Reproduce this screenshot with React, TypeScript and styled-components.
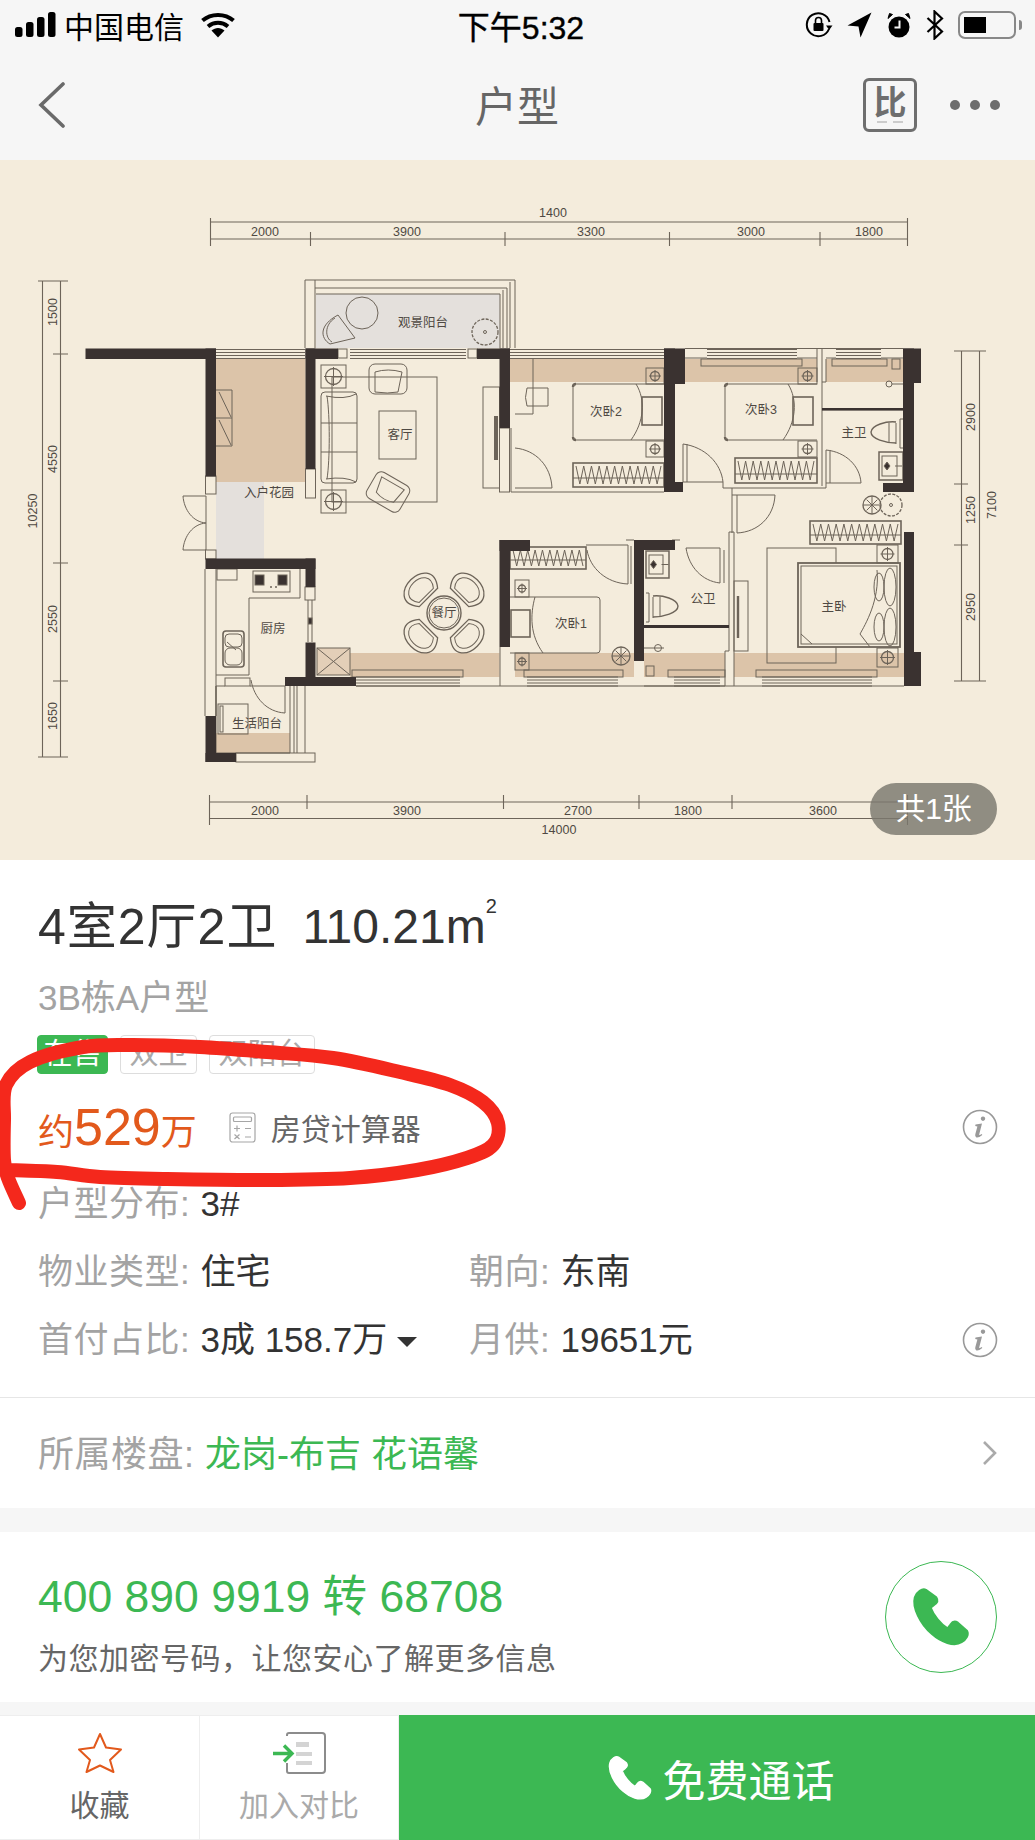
import React from "react";
import styled, { createGlobalStyle } from "styled-components";

const GREEN = "#3cb853";
const ORANGE = "#e2591c";
const WALL = "#3a3230";
const LINE = "#6d6459";
const BROWN = "#dcc4a9";
const PALE = "#e4e0dc";
const PLAN_BG = "#f4ecdc";

const GlobalStyle = createGlobalStyle`
  html, body {
    margin: 0;
    padding: 0;
    background: #f6f6f6;
    font-family: "Liberation Sans", "Noto Sans CJK SC", sans-serif;
  }
`;

/* ---------- floor plan data ---------- */

type Box = [number, number, number, number];

const walls: Box[] = [
  [85.5, 188.5, 130.5, 10.5],
  [205.5, 188.5, 10.5, 128],
  [305.5, 188.5, 10, 120.5],
  [305.5, 188.5, 32.5, 10.5],
  [477, 188.5, 33, 10.5],
  [499.5, 188.5, 10.5, 79.5],
  [664, 188.5, 21, 35.5],
  [664, 188.5, 11, 143.5],
  [664, 322, 19, 10],
  [903, 188.5, 18, 34.5],
  [903, 188.5, 11, 143.5],
  [883, 323, 31, 9],
  [205.5, 398.5, 110, 10.5],
  [305.5, 398.5, 10, 28.5],
  [305.5, 482.5, 10, 43.5],
  [285, 517, 71, 9],
  [205.5, 556, 10.5, 46],
  [205.5, 593, 30.5, 9],
  [499.5, 380, 10.5, 107],
  [499.5, 380, 30.5, 11],
  [634, 380, 10, 121],
  [634, 380, 41, 10],
  [904, 372, 10, 154],
  [904, 492, 17, 34],
];

const browns: Box[] = [
  [216, 199, 89.5, 123],
  [510, 199, 154, 23],
  [685, 199, 132, 23],
  [826, 199, 77, 23],
  [350, 493, 149.5, 24],
  [515, 493, 119, 24],
  [644, 493, 81, 24],
  [734, 493, 170, 24],
  [216, 573, 74, 20],
];

const outlines: Box[] = [
  [205.5, 316, 10.5, 18],
  [305.5, 309, 10, 29],
  [305, 427, 10, 13],
  [205.5, 390, 10.5, 9],
  [236, 593, 79, 9],
  [338, 189, 9, 9],
  [468, 189, 9, 9],
  [483, 227, 16.5, 101],
  [499.5, 268, 10, 64],
  [379, 251, 37, 48],
  [332, 217, 105, 125],
  [767, 388, 69, 115],
  [734, 421, 14, 70],
  [701, 199, 101, 7],
  [832, 199, 55, 7],
  [524, 510, 99, 7],
  [668, 510, 57, 7],
  [756, 510, 121, 7],
  [352, 510, 111, 7],
  [892, 199, 8, 10],
  [646, 506, 8, 10],
  [217, 409, 20, 11],
  [253, 411, 37, 21],
  [225, 518, 25, 8],
  [218, 544, 30, 30],
  [317, 488, 33, 27],
];

const windows: Box[] = [
  [216, 189.5, 89, 9],
  [350, 189.5, 116, 9],
  [510, 189.5, 154, 9],
  [707, 189.5, 90, 9],
  [836, 189.5, 45, 9],
  [356, 517, 104, 9],
  [527, 517, 91, 9],
  [674, 517, 46, 9],
  [762, 517, 110, 9],
];

const paths: string[] = [
  // balcony frame
  "M305 188V120H515V188M315 120V188M315 128H507V188M316 134H500V188M503 130V188M510 122V188",
  // entry door and walls
  "M183 336H206V390H183M183 336C184 350 193 362 206 363C193 364 184 376 183 390",
  // cabinet in the entry garden
  "M216 230H232V286H216M216 258H232M219 232L231 257M219 260L231 285",
  // door and wall of bedroom 2
  "M515 288C536 290 551 306 552 328H515M552 332H664M511 268V332H552",
  // desk in bedroom 2
  "M533 199V254H515M527 228H548V246H527Q524 238 527 228",
  // door between bedroom 2 and 3
  "M683 284V322H723M687 284V322M683 284C705 287 721 303 723 322M723 322V328H826V290M732 328V373M737 335V373M732 335H775C774 357 758 372 737 373",
  // top outline of bedroom 3 and the bathroom
  "M685 188.5H903M685 198H707M797 198H817M826 198H836M881 198H903",
  // bathroom partition
  "M817 188V222M822 188V222H826V199M822 222V326",
  // master bathroom door, towel ring
  "M826 290C846 292 860 306 861 323H826M830 290V323M892 224H903",
  // corridor and public bathroom
  "M729 372H734V517M729 372V491H725V526H636M734 517V526M672 380H680M686 388H720V423M724 390V423M686 388C689 407 702 421 720 423M664 488H644",
  // bedroom 1 door
  "M586 385H628V424M631 386V424M587 390C590 408 606 423 628 424M626 380H634",
  // bedroom 1 bed
  "M510 437H597Q600 437 600 440V490Q600 493 597 493H510",
  // lower wall of the flat
  "M644 526H904M500 487V526H636M356 526H500",
  // kitchen counter
  "M216 409V556M205 409V556M300 409V438H249V515H216M216 526H225M250 526H285M308 440V482M312 440V482",
  // utility balcony
  "M216 556V526M216 526V593H290M251 520C254 538 267 552 285 553V526M290 526V593M294 526V593M297 526V593M305 526V593",
];

const beds = [
  { x: 573, bedW: 91, pillowX: 642, lampX: 646 },
  { x: 725, bedW: 92, pillowX: 793, lampX: 798 },
];

const wardrobes: Box[] = [
  [573, 303, 91, 24],
  [735, 298, 82, 25],
  [810, 361, 91, 23],
  [510, 387, 76, 22],
];

const lamps: [number, number, number, number][] = [
  [321, 205, 25, 23],
  [321, 330, 25, 23],
  [646, 208, 18, 16],
  [646, 281, 18, 16],
  [798, 208, 19, 16],
  [798, 281, 19, 16],
  [515, 420, 14, 17],
  [515, 493, 14, 17],
];

const rooms: [string, number, number][] = [
  ["观景阳台", 423, 163],
  ["客厅", 400, 275],
  ["入户花园", 269, 333],
  ["次卧2", 606, 252],
  ["次卧3", 761, 250],
  ["主卫", 854, 273],
  ["厨房", 273, 469],
  ["餐厅", 444, 453],
  ["生活阳台", 257, 564],
  ["次卧1", 571, 464],
  ["公卫", 703, 439],
  ["主卧", 834, 447],
];

const hDims: [string, number, number][] = [
  ["1400", 553, 53],
  ["2000", 265, 72],
  ["3900", 407, 72],
  ["3300", 591, 72],
  ["3000", 751, 72],
  ["1800", 869, 72],
  ["2000", 265, 651],
  ["3900", 407, 651],
  ["2700", 578, 651],
  ["1800", 688, 651],
  ["3600", 823, 651],
  ["14000", 559, 670],
];

const vDims: [string, number, number][] = [
  ["1500", 53, 152],
  ["4550", 53, 299],
  ["10250", 33, 351],
  ["2550", 53, 459],
  ["1650", 53, 556],
  ["2900", 971, 257],
  ["1250", 971, 350],
  ["7100", 991.5, 345],
  ["2950", 971, 447],
];

const dimLines =
  "M210.5 62H907.5M210.5 79H907.5M210.5 58V86M310.5 72V86M505 72V86M669.5 72V86M820 72V86M907.5 58V86" +
  "M42.5 121V597M60.5 121V597M38 121H68M53 194H68M53 403H68M53 521H68M38 597H68" +
  "M209.5 642H907.5M209.5 658.5H907.5M209.5 635V665M307 635V649M503.5 635V649M639 635V649M732 635V649M907.5 635V665" +
  "M961.5 191V521M979.5 191V521M954 191H986M954 324H968M954 385H968M954 521H986";

/* ---------- small drawings ---------- */

const Lamp = ({ box }: { box: [number, number, number, number] }) => {
  const [x, y, w, h] = box;
  const cx = x + w / 2;
  const cy = y + h / 2;
  const r = Math.min(w, h) / 2 - 3.5;
  return (
    <g>
      <rect x={x} y={y} width={w} height={h} />
      <circle cx={cx} cy={cy} r={r} strokeWidth={1.3} />
      <path d={`M${cx - r - 1.5} ${cy}H${cx + r + 1.5}M${cx} ${cy - r - 1.5}V${cy + r + 1.5}`} />
    </g>
  );
};

const Wardrobe = ({ box }: { box: Box }) => {
  const [x, y, w, h] = box;
  const count = Math.floor(w / 4);
  let zig = `M${x + 3} ${y + 3}`;
  for (let i = 1; i <= count; i++) {
    zig += `L${x + 3 + ((w - 6) * i) / count} ${i % 2 ? y + h - 3 : y + 3}`;
  }
  return (
    <g>
      <rect x={x} y={y} width={w} height={h} strokeWidth={1.6} />
      <path d={zig} />
      <path d={`M${x} ${y + h - 9}H${x + w}`} strokeWidth={1.2} />
    </g>
  );
};

const Bed = ({ x, bedW, pillowX, lampX }: { x: number; bedW: number; pillowX: number; lampX: number }) => (
  <g>
    <path d={`M${x + 3} 224H${x + bedW}M${x + 3} 280H${x + bedW}M${x} 227V277`} />
    <path d={`M${x} 227Q${x} 224 ${x + 3} 224M${x} 277Q${x} 280 ${x + 3} 280`} strokeWidth={2.4} />
    <rect x={pillowX} y={237} width={20} height={28} strokeWidth={1.6} />
    <path d={`M${lampX - 10} 224C${lampX} 240 ${lampX - 2} 262 ${lampX - 15} 280`} />
  </g>
);

const Plant = ({ x, y, r, dark }: { x: number; y: number; r: number; dark?: boolean }) => (
  <g>
    <circle cx={x} cy={y} r={r} strokeDasharray={dark ? undefined : "3 1.4"} strokeWidth={1.3} />
    {dark ? (
      <path d={`M${x - r} ${y}H${x + r}M${x} ${y - r}V${y + r}M${x - r * 0.6} ${y - r * 0.6}L${x + r * 0.6} ${y + r * 0.6}M${x - r * 0.6} ${y + r * 0.6}L${x + r * 0.6} ${y - r * 0.6}`} />
    ) : (
      <circle cx={x} cy={y} r={1.5} />
    )}
  </g>
);

const Toilet = ({ x, y, flip }: { x: number; y: number; flip?: boolean }) => (
  <g transform={flip ? `translate(${x + 33} ${y}) scale(-1 1)` : `translate(${x} ${y})`}>
    <path d="M26 4V25M30 0V29M33 0H30M33 29H30" />
    <path d="M26 3C16 2 2 6 1 13C1 20 16 24 26 24" strokeWidth={1.4} />
    <path d="M19 4V23" />
  </g>
);

const Sink = ({ x, y, w, h }: { x: number; y: number; w: number; h: number }) => (
  <g>
    <rect x={x} y={y} width={w} height={h} strokeWidth={1.5} />
    <rect x={x + 3} y={y + 4} width={w - 9} height={h - 8} />
    <path d={`M${x + w / 2 - 4} ${y + h / 2 - 4}l3 4l-3 4l-3 -4zM${x + w / 2 + 4} ${y + h / 2}h7`} fill={WALL} />
  </g>
);

// dining chair, drawn above the table and turned round its centre
const Chair = ({ angle }: { angle: number }) => (
  <g transform={`rotate(${angle} 444 453)`}>
    <path d="M431 431H457C470 415 456 406 444 406C432 406 418 415 431 431Z" strokeWidth={1.3} />
    <path d="M434 428H454C463 417 453 410 444 410C435 410 425 417 434 428Z" />
  </g>
);

const FloorPlanDrawing = () => (
  <PlanSvg viewBox="0 0 1035 700">
    {browns.map(([x, y, w, h]) => (
      <rect key={`${x}-${y}`} x={x} y={y} width={w} height={h} fill={BROWN} />
    ))}
    <rect x={216} y={322} width={48} height={77} fill={PALE} />
    <rect x={316} y={134} width={184} height={54} fill={PALE} />
    <rect x={317} y={488} width={33} height={27} fill="#e3cfb8" />

    <PlanLines>
      {paths.map((d) => (
        <path key={d} d={d} />
      ))}
      {outlines.map(([x, y, w, h]) => (
        <rect key={`o${x}-${y}`} x={x} y={y} width={w} height={h} />
      ))}
      {windows.map(([x, y, w, h]) => (
        <path key={`w${x}-${y}`} d={`M${x} ${y}H${x + w}M${x} ${y + 3}H${x + w}M${x} ${y + 6}H${x + w}M${x} ${y + 9}H${x + w}`} />
      ))}
      {lamps.map((b) => (
        <Lamp key={`l${b[0]}-${b[1]}`} box={b} />
      ))}
      {wardrobes.map((b) => (
        <Wardrobe key={`wd${b[0]}`} box={b} />
      ))}
      {beds.map((b) => (
        <Bed key={b.x} {...b} />
      ))}

      {/* balcony furniture */}
      <circle cx={362} cy={153} r={16} />
      <path d="M338 155L355 178L330 184C320 178 319 165 338 155Z" />
      <path d="M335 158C324 165 325 178 332 182" />
      <Plant x={485} y={172} r={13} />

      {/* living room */}
      <rect x={321} y={232} width={36} height={91} rx={4} />
      <path d="M321 263H357M321 292H357M327 236C330 255 330 300 327 319M326 236Q345 240 356 234M326 319Q345 316 356 322" />
      <rect x={369} y={204} width={38} height={30} rx={6} />
      <path d="M375 212Q388 208 402 212L398 232Q388 234 375 232Z" />
      <g transform="rotate(30 388 332)">
        <rect x={369} y={317} width={38} height={30} rx={6} />
        <path d="M375 322L401 322L398 338Q388 342 378 338Z" />
      </g>
      <path d="M495 256V300M497 256V300" strokeWidth={2} />

      {/* kitchen */}
      <rect x={255} y={415} width={9} height={10} fill={WALL} />
      <rect x={278} y={415} width={9} height={10} fill={WALL} />
      <path d="M270 427H272M275 427H277" strokeWidth={1.5} />
      <rect x={223} y={471} width={21} height={36} rx={3} strokeWidth={1.6} />
      <rect x={225} y={474} width={17} height={13} rx={4} />
      <rect x={225} y={488} width={17} height={17} rx={5} />
      <path d="M227 482l9 8M317 488L350 515M350 488L317 515" />
      <rect x={308.5} y={458} width={3.5} height={6} fill={WALL} />
      <rect x={220} y={546} width={3} height={26} />

      {/* dining room */}
      <circle cx={444} cy={453} r={17} strokeWidth={1.4} />
      <circle cx={444} cy={453} r={15} />
      <Chair angle={-45} />
      <Chair angle={45} />
      <Chair angle={135} />
      <Chair angle={225} />

      {/* bathrooms */}
      <circle cx={889} cy={224} r={3} />
      <circle cx={658} cy={488} r={3.5} />
      <Toilet x={870} y={259} />
      <Toilet x={646} y={433} flip />
      <Sink x={879} y={292} w={24} h={28} />
      <Sink x={646} y={391} w={23} h={27} />
      <Plant x={872} y={345} r={9} dark />
      <Plant x={891} y={345} r={11} />
      <Plant x={621} y={496} r={9} dark />

      {/* bedroom 1 */}
      <rect x={511} y={450} width={19} height={27} strokeWidth={1.6} />
      <path d="M535 437C530 455 530 475 543 493" />

      {/* master bedroom */}
      <rect x={798} y={403} width={102} height={84} fill={PLAN_BG} strokeWidth={1.8} />
      <rect x={801} y={406} width={96} height={78} />
      <ellipse cx={890} cy={427} rx={6} ry={19} />
      <ellipse cx={879} cy={427} rx={5} ry={14} />
      <ellipse cx={890} cy={467} rx={6} ry={19} />
      <ellipse cx={879} cy={467} rx={5} ry={14} />
      <path d="M877 410C880 440 865 465 860 474L870 487M801 474L812 484" />
      <Lamp box={[877, 385, 21, 18]} />
      <Lamp box={[877, 488, 21, 19]} />
      <path d="M738 436V478" strokeWidth={2.4} />
    </PlanLines>

    {walls.map(([x, y, w, h]) => (
      <rect key={`${x}-${y}-${w}`} x={x} y={y} width={w} height={h} fill={WALL} />
    ))}
    <rect x={644} y={465} width={85} height={3} fill={WALL} />
    <rect x={822} y={248} width={81} height={2.6} fill={WALL} />

    <DimLine d={dimLines} />
    {hDims.map(([t, x, y]) => (
      <DimText key={`${t}-${x}-${y}`} x={x} y={y} dy="0.35em">
        {t}
      </DimText>
    ))}
    {vDims.map(([t, x, y]) => (
      <DimText key={`${t}-${x}-${y}`} x={x} y={y} dy="0.35em" transform={`rotate(-90 ${x} ${y})`}>
        {t}
      </DimText>
    ))}
    {rooms.map(([t, x, y]) => (
      <RoomText key={t} x={x} y={y} dy="0.35em">
        {t}
      </RoomText>
    ))}
  </PlanSvg>
);

/* ---------- icons ---------- */

const PhoneGlyph = ({ size, color }: { size: number; color: string }) => (
  <svg width={size} height={size} viewBox="-2 -2 64 64">
    <path
      fill={color}
      stroke={color}
      strokeWidth={2}
      strokeLinejoin="round"
      d="M14 1C10 -1 4 3 2 9C-1 20 8 38 20 48C30 57 44 62 52 57C57 54 60 49 58 45L48 36C45 34 42 35 40 38L37 42C30 38 22 28 19 20L23 17C26 15 27 12 25 9Z"
    />
  </svg>
);

const InfoIcon = () => (
  <svg width={36} height={36} viewBox="0 0 36 36">
    <circle cx={18} cy={18} r={16.5} fill="none" stroke="#999" strokeWidth={1.6} />
    <path fill="#999" d="M21 7.5a2.2 2.2 0 1 1-.01 0ZM13.5 15.5L20 14.6L17.2 25.5Q17 26.8 19.8 25L20.3 26Q16.5 29 14.4 28.4Q12.6 27.8 13.3 25.3L15.4 17.4L13.2 17Z" />
  </svg>
);

const CalcIcon = () => (
  <svg width={27} height={31} viewBox="0 0 27 31" fill="none" stroke="#a6a6a6" strokeWidth={1.2}>
    <rect x={1} y={1} width={25} height={29} rx={2.5} />
    <rect x={4.5} y={5} width={18} height={4.5} rx={1} />
    <path d="M5 16.5H11M8 13.5V19.5M16 16.5H22M5.5 22.5L10.5 27M10.5 22.5L5.5 27M16 25H22M19 22.5V22.6M19 27.2V27.3" />
  </svg>
);

const SignalIcon = () => (
  <svg width={41} height={26} viewBox="0 0 41 26" fill="#000">
    <rect x={0} y={15} width={7.5} height={10} rx={2.5} />
    <rect x={11} y={10} width={7.5} height={15} rx={2.5} />
    <rect x={22} y={5} width={7.5} height={20} rx={2.5} />
    <rect x={33} y={0} width={7.5} height={25} rx={2.5} />
  </svg>
);

const WifiIcon = () => (
  <svg width={36} height={26} viewBox="0 0 36 26">
    <path d="M2.5 8.5C11 1 25 1 33.5 8.5" fill="none" stroke="#000" strokeWidth={4} />
    <path d="M8 14.5C14 9.5 22 9.5 28 14.5" fill="none" stroke="#000" strokeWidth={4} />
    <path d="M11.5 18.5C15.5 15 20.5 15 24.5 18.5L18 25.5Z" />
  </svg>
);

const RotationLockIcon = () => (
  <svg width={28} height={28} viewBox="0 0 28 28" fill="none" stroke="#000" strokeWidth={2}>
    <path d="M24 18A11.5 11.5 0 1 1 24.5 11" />
    <path d="M21 14.5H27.5L24.2 19Z" fill="#000" stroke="none" />
    <rect x={8.5} y={12} width={10} height={8} rx={1} fill="#000" stroke="none" />
    <path d="M10.5 12V9.5A3 3 0 0 1 16.5 9.5V12" strokeWidth={1.6} />
  </svg>
);

const LocationIcon = () => (
  <svg width={25} height={26} viewBox="0 0 25 26">
    <path d="M24.5 0.5L0.5 13.5L11.5 14.5L13.5 25.5Z" />
  </svg>
);

const AlarmIcon = () => (
  <svg width={26} height={26} viewBox="0 0 26 26">
    <circle cx={13} cy={15} r={10.5} />
    <path d="M2 6.5L6.5 2.5L3.5 1.5ZM24 6.5L19.5 2.5L22.5 1.5Z" stroke="#000" />
    <path d="M13.5 8.5V15.5H8.5" fill="none" stroke="#f6f6f6" strokeWidth={2} />
  </svg>
);

const BluetoothIcon = () => (
  <svg width={18} height={30} viewBox="0 0 18 30" fill="none" stroke="#000" strokeWidth={2.2}>
    <path d="M1.5 8L16 21.5L8.5 28.5V1.5L16 8.5L1.5 22" />
  </svg>
);

const CompareIcon = () => (
  <svg width={54} height={42} viewBox="0 0 54 42">
    <path d="M15 4V3Q15 1 17 1H50Q53 1 53 4V38Q53 41 50 41H17Q15 41 15 39V31" fill="none" stroke="#8c8c8c" strokeWidth={2} />
    <path fill="#d4d4d4" d="M24 10H37V15H24ZM24 20H40V24H24ZM24 29H40V33H24Z" />
    <path d="M1 21.5H19M12 13.5L20 21.5L12 29.5" fill="none" stroke={GREEN} strokeWidth={3.4} />
  </svg>
);

const StarIcon = () => (
  <svg width={46} height={42} viewBox="0 0 46 42">
    <path
      d="M23 2L29 15.5L44 17.5L33 28L36.5 40L23 33.5L9.5 40L13 28L2 17.5L17 15.5Z"
      fill="none"
      stroke={ORANGE}
      strokeWidth={2}
      strokeLinejoin="round"
    />
  </svg>
);

/* hand-drawn red mark over the price row */
const scribble: [number, number][] = [
  [19, 173], [8, 148], [4, 130], [4, 90], [6, 55], [30, 32], [83, 17], [133, 15], [200, 17],
  [267, 22], [333, 28], [400, 42], [450, 55], [483, 72], [498, 93], [493, 115], [467, 128],
  [417, 140], [350, 148], [267, 150], [167, 149], [100, 147], [57, 142], [6, 140],
];

const smooth = (pts: [number, number][]) => {
  let d = `M${pts[0][0]} ${pts[0][1]}`;
  for (let i = 0; i < pts.length - 1; i++) {
    const p0 = pts[Math.max(i - 1, 0)];
    const p1 = pts[i];
    const p2 = pts[i + 1];
    const p3 = pts[Math.min(i + 2, pts.length - 1)];
    d += `C${p1[0] + (p2[0] - p0[0]) / 6} ${p1[1] + (p2[1] - p0[1]) / 6} ${p2[0] - (p3[0] - p1[0]) / 6} ${p2[1] - (p3[1] - p1[1]) / 6} ${p2[0]} ${p2[1]}`;
  }
  return d;
};

export default function App() {
  return (
    <Page>
      <GlobalStyle />
      <Header>
        <StatusBar>
          <StatusLeft>
            <SignalIcon />
            <Carrier>中国电信</Carrier>
            <WifiIcon />
          </StatusLeft>
          <Clock>下午5:32</Clock>
          <StatusRight>
            <RotationLockIcon />
            <LocationIcon />
            <AlarmIcon />
            <BluetoothIcon />
            <Battery>
              <BatteryFill />
            </Battery>
            <BatteryNub />
          </StatusRight>
        </StatusBar>
        <NavBar>
          <svg width={30} height={46} viewBox="0 0 30 46" fill="none" stroke="#6a6a6a" strokeWidth={3.6} strokeLinecap="round">
            <path d="M25 2L3 23L25 44" />
          </svg>
          <NavTitle>户型</NavTitle>
          <NavActions>
            <CompareBadge>
              <CompareChar>比</CompareChar>
              <CompareDashes />
            </CompareBadge>
            <MoreDots>
              <Dot />
              <Dot />
              <Dot />
            </MoreDots>
          </NavActions>
        </NavBar>
      </Header>

      <PlanArea>
        <FloorPlanDrawing />
        <CountPill>共1张</CountPill>
      </PlanArea>

      <InfoSection>
        <Title>
          <TitleRooms>4室2厅2卫</TitleRooms>
          <TitleArea>110.21m</TitleArea>
          <Sup>2</Sup>
        </Title>
        <SubTitle>3B栋A户型</SubTitle>
        <Tags>
          <Tag $solid>在售</Tag>
          <Tag>双卫</Tag>
          <Tag>双阳台</Tag>
        </Tags>
        <PriceRow>
          <Price>
            约<PriceNum>529</PriceNum>万
          </Price>
          <CalcLink>
            <CalcIcon />
            <CalcText>房贷计算器</CalcText>
          </CalcLink>
          <RowIcon>
            <InfoIcon />
          </RowIcon>
        </PriceRow>
        <Facts>
          <FactRow>
            <Fact>
              <Label>户型分布: </Label>3#
            </Fact>
          </FactRow>
          <FactRow>
            <Fact>
              <Label>物业类型: </Label>住宅
            </Fact>
            <Fact>
              <Label>朝向: </Label>东南
            </Fact>
          </FactRow>
          <FactRow>
            <Fact>
              <Label>首付占比: </Label>3成 158.7万 <Caret />
            </Fact>
            <Fact>
              <Label>月供: </Label>19651元
            </Fact>
            <RowIcon>
              <InfoIcon />
            </RowIcon>
          </FactRow>
        </Facts>
      </InfoSection>

      <EstateRow>
        <EstateText>
          <Label>所属楼盘: </Label>
          <GreenText>龙岗-布吉 花语馨</GreenText>
        </EstateText>
        <svg width={16} height={26} viewBox="0 0 16 26" fill="none" stroke="#aaa" strokeWidth={2.6}>
          <path d="M2 2L13 13L2 24" />
        </svg>
      </EstateRow>

      <ContactCard>
        <ContactText>
          <HotLine>400 890 9919 转 68708</HotLine>
          <HotLineNote>为您加密号码，让您安心了解更多信息</HotLineNote>
        </ContactText>
        <CallCircle>
          <PhoneGlyph size={60} color={GREEN} />
        </CallCircle>
      </ContactCard>

      <BottomBar>
        <BarItem>
          <StarIcon />
          <BarLabel>收藏</BarLabel>
        </BarItem>
        <BarItem>
          <CompareIcon />
          <BarLabel $muted>加入对比</BarLabel>
        </BarItem>
        <CallButton>
          <PhoneGlyph size={46} color="#fff" />
          免费通话
        </CallButton>
      </BottomBar>

      <ScribbleMark viewBox="0 0 520 190" fill="none">
        <path d={smooth(scribble)} stroke="#f4281c" strokeWidth={14} strokeLinecap="round" strokeLinejoin="round" />
      </ScribbleMark>
    </Page>
  );
}

const Page = styled.div`
  position: relative;
  width: 1035px;
  height: 1840px;
  overflow: hidden;
  background: #f6f6f6;
  color: #333;
`;

const Header = styled.header`
  height: 160px;
  background: #f6f6f6;
`;

const StatusBar = styled.div`
  display: grid;
  grid-template-columns: 1fr auto 1fr;
  align-items: center;
  height: 50px;
  padding: 0 13px 0 15px;
  color: #000;
`;

const StatusLeft = styled.div`
  display: flex;
  align-items: center;
  gap: 8px;
`;

const Carrier = styled.span`
  font-size: 30px;
  margin-right: 8px;
`;

const Clock = styled.span`
  font-size: 32px;
  margin-left: 5px;
  -webkit-text-stroke: 0.4px #000;
`;

const StatusRight = styled.div`
  display: flex;
  align-items: center;
  justify-content: flex-end;
  gap: 14px;
`;

const Battery = styled.div`
  box-sizing: border-box;
  width: 58px;
  height: 28px;
  padding: 4px;
  border: 2.5px solid #888;
  border-radius: 7px;
`;

const BatteryFill = styled.div`
  width: 22px;
  height: 100%;
  background: #000;
`;

const BatteryNub = styled.div`
  width: 3px;
  height: 10px;
  margin-left: -11px;
  background: #888;
  border-radius: 0 3px 3px 0;
`;

const NavBar = styled.div`
  display: grid;
  grid-template-columns: 1fr auto 1fr;
  align-items: center;
  height: 110px;
  padding: 0 35px 0 38px;
`;

const NavTitle = styled.h1`
  margin: 0 0 4px -4px;
  font-size: 42px;
  font-weight: 400;
  color: #666;
`;

const NavActions = styled.div`
  display: flex;
  align-items: center;
  justify-content: flex-end;
  gap: 33px;
`;

const CompareBadge = styled.div`
  box-sizing: border-box;
  display: flex;
  flex-direction: column;
  align-items: center;
  width: 54px;
  height: 54px;
  padding-top: 4px;
  border: 3.5px solid #6e6e6e;
  border-radius: 6px;
`;

const CompareChar = styled.span`
  font-size: 33px;
  line-height: 36px;
  font-weight: 700;
  color: #6e6e6e;
`;

const CompareDashes = styled.span`
  width: 26px;
  height: 2px;
  background: repeating-linear-gradient(90deg, #ccc 0 10px, transparent 10px 16px);
`;

const MoreDots = styled.div`
  display: flex;
  gap: 10px;
`;

const Dot = styled.span`
  width: 10px;
  height: 10px;
  border-radius: 50%;
  background: #6e6e6e;
`;

const PlanArea = styled.section`
  position: relative;
  height: 700px;
  background: ${PLAN_BG};
`;

const PlanSvg = styled.svg`
  display: block;
  width: 1035px;
  height: 700px;
`;

const PlanLines = styled.g`
  fill: none;
  stroke: ${LINE};
  stroke-width: 1;
`;

const DimLine = styled.path`
  fill: none;
  stroke: ${LINE};
  stroke-width: 1.1;
`;

const DimText = styled.text`
  font-size: 12.5px;
  fill: #4f4943;
  text-anchor: middle;
`;

const RoomText = styled.text`
  font-size: 12.5px;
  fill: #4f4943;
  text-anchor: middle;
`;

const CountPill = styled.div`
  position: absolute;
  left: 870px;
  top: 623px;
  width: 127px;
  height: 52px;
  border-radius: 26px;
  background: rgba(122, 119, 110, 0.82);
  color: #fff;
  font-size: 30px;
  line-height: 52px;
  text-align: center;
`;

const InfoSection = styled.section`
  box-sizing: border-box;
  height: 538px;
  padding: 39px 37px 0 38px;
  background: #fff;
  border-bottom: 1px solid #e6e6e6;
`;

const Title = styled.h2`
  display: flex;
  align-items: flex-start;
  margin: 0;
  height: 56px;
  line-height: 56px;
  font-weight: 400;
  color: #333;
  white-space: nowrap;
`;

const TitleRooms = styled.span`
  font-size: 50px;
  letter-spacing: 1px;
`;

const TitleArea = styled.span`
  margin-left: 25px;
  font-size: 48px;
`;

const Sup = styled.span`
  margin-top: -4px;
  font-size: 20px;
  line-height: 22px;
`;

const SubTitle = styled.div`
  margin-top: 23px;
  height: 40px;
  font-size: 35px;
  line-height: 40px;
  color: #a3a3a3;
`;

const Tags = styled.div`
  display: flex;
  gap: 12px;
  margin: 17px 0 0 -1px;
`;

const Tag = styled.span<{ $solid?: boolean }>`
  box-sizing: border-box;
  height: 39px;
  padding: 0 ${(p) => (p.$solid ? "5.5px" : "8.5px")};
  border: 1px solid ${(p) => (p.$solid ? GREEN : "#ddd")};
  border-radius: 4px;
  background: ${(p) => (p.$solid ? GREEN : "#fff")};
  color: ${(p) => (p.$solid ? "#fff" : "#aaa")};
  font-size: 29px;
  line-height: 37px;
`;

const PriceRow = styled.div`
  display: flex;
  align-items: center;
  height: 56px;
  margin-top: 25px;
`;

const Price = styled.div`
  font-size: 36px;
  color: ${ORANGE};
  white-space: nowrap;
`;

const PriceNum = styled.span`
  font-size: 52px;
`;

const CalcLink = styled.div`
  display: flex;
  align-items: center;
  gap: 15px;
  margin-left: 32px;
`;

const CalcText = styled.span`
  font-size: 30px;
  color: #666;
`;

const RowIcon = styled.div`
  display: flex;
  margin-left: auto;
`;

const Facts = styled.div`
  display: grid;
  gap: 24px;
  margin-top: 27px;
`;

const FactRow = styled.div`
  display: grid;
  grid-template-columns: 431px auto 1fr;
  align-items: center;
  height: 44px;
`;

const Fact = styled.div`
  font-size: 35px;
  line-height: 44px;
  color: #333;
  white-space: nowrap;
`;

const Label = styled.span`
  letter-spacing: 0.5px;
  color: #a3a3a3;
`;

const Caret = styled.span`
  display: inline-block;
  vertical-align: 5px;
  border-left: 10px solid transparent;
  border-right: 10px solid transparent;
  border-top: 10px solid #333;
`;

const EstateRow = styled.div`
  box-sizing: border-box;
  display: flex;
  align-items: center;
  justify-content: space-between;
  height: 110px;
  padding: 0 37px 0 38px;
  background: #fff;
`;

const EstateText = styled.div`
  margin-bottom: 5px;
  font-size: 36px;
  color: #333;
  white-space: nowrap;
`;

const GreenText = styled.span`
  color: ${GREEN};
`;

const ContactCard = styled.section`
  box-sizing: border-box;
  display: flex;
  align-items: center;
  justify-content: space-between;
  height: 170px;
  margin-top: 24px;
  padding: 0 38px 0 38px;
  background: #fff;
`;

const ContactText = styled.div`
  padding-top: 14px;
`;

const HotLine = styled.div`
  font-size: 44.5px;
  line-height: 56px;
  color: ${GREEN};
  white-space: nowrap;
`;

const HotLineNote = styled.div`
  margin-top: 14px;
  font-size: 30px;
  line-height: 40px;
  letter-spacing: 0.5px;
  color: #666;
`;

const CallCircle = styled.div`
  box-sizing: border-box;
  display: flex;
  align-items: center;
  justify-content: center;
  width: 112px;
  height: 112px;
  border: 1.5px solid ${GREEN};
  border-radius: 50%;
`;

const BottomBar = styled.nav`
  display: grid;
  grid-template-columns: 200px 199px 1fr;
  height: 125px;
  margin-top: 13px;
  background: #fff;
`;

const BarItem = styled.div`
  box-sizing: border-box;
  display: flex;
  flex-direction: column;
  align-items: center;
  padding-top: 16px;
  gap: 9px;
  border: 1px solid #eee;
  border-width: 1px 1px 1px 0;
`;

const BarLabel = styled.span<{ $muted?: boolean }>`
  font-size: 30px;
  line-height: 46px;
  color: ${(p) => (p.$muted ? "#aaa" : "#666")};
`;

const CallButton = styled.div`
  display: flex;
  align-items: center;
  justify-content: center;
  gap: 10px;
  padding-left: 7px;
  background: ${GREEN};
  color: #fff;
  font-size: 43px;
`;

const ScribbleMark = styled.svg`
  position: absolute;
  left: 0;
  top: 1030px;
  width: 520px;
  height: 190px;
  pointer-events: none;
`;
